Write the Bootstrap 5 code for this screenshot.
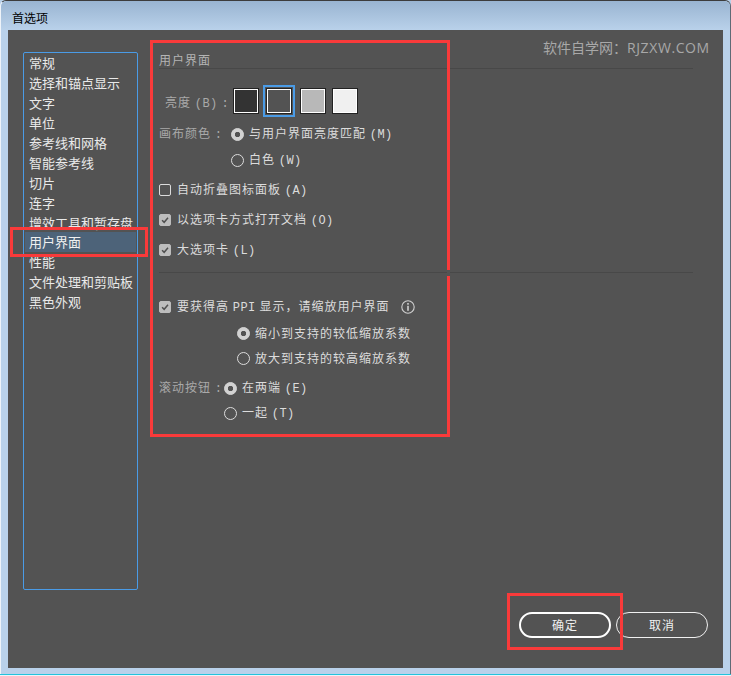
<!DOCTYPE html>
<html lang="zh">
<head>
<meta charset="utf-8">
<title>首选项</title>
<link href="https://cdn.jsdelivr.net/npm/bootstrap@5.3.0/dist/css/bootstrap.min.css" rel="stylesheet">
<script src="https://cdn.jsdelivr.net/npm/bootstrap@5.3.0/dist/js/bootstrap.bundle.min.js"></script>
<style>
html,body{margin:0;height:100%;background:#b9d1ea;overflow:hidden}
body{font-family:"Noto Sans CJK SC",sans-serif;font-size:12px;line-height:20px;color:#dcdcdc}
.ltn{font-family:"Liberation Mono",monospace;font-size:12px;letter-spacing:.5px}
.dlg{width:731px;height:676px;display:flex;flex-direction:column;position:relative;background:#b9d1ea;border:1px solid #5e6a76;border-top-color:#3c3c3c;border-left-color:#eef3f9;border-bottom:0;border-radius:6px 6px 0 0;box-sizing:border-box}
.dlg-end{position:absolute;left:-1px;right:-1px;bottom:1px;height:1px;background:#22c3dc;box-shadow:0 1px 0 #eef3f9}
.ttl{height:29px;flex:none;padding:8px 0 0 11px;background:linear-gradient(#99b4d1,#b9d1ea);color:#000;font:12px/18px "Noto Sans CJK SC",sans-serif;border-radius:6px 6px 0 0}
.pane{width:715px;height:638px;margin-left:7px;background:#535353;position:relative;flex:none;display:flex}
.side{width:115px;height:538px;margin:22px 0 0 15px;border:1px solid #4a9be6;border-radius:2px;padding:0 1px;background:transparent;flex:none}
.side .list-group-item{background:transparent;border:0;border-radius:0;padding:0 0 0 4px;height:20px;font:13px/20px "Noto Sans CJK SC",sans-serif;color:#e9e9e9;white-space:nowrap}
.side .list-group-item.active{background:#4d6379;color:#f0f0f0}
.mainp{margin-left:21px;width:534px;flex:none;padding-top:20px}
.hd{height:18px;line-height:20px;color:#b4b4b4;letter-spacing:1px}
.rule{height:1px;background:#484848}
.row-l{display:flex;align-items:center;white-space:nowrap;letter-spacing:1px}
.mut{color:#a9a9a9}
.swatches{display:flex;align-items:center;height:32px;margin-top:16px;padding-left:6px}
.swatches .mut{width:68px;padding-top:3px}
.swt{width:26px;height:26px;border:1px solid #222;box-shadow:inset 0 0 0 1px #fff;flex:none}
.swt-wrap{width:32px;height:32px;border:2px solid #4a9be6;display:flex;align-items:center;justify-content:center;margin:0 5px 0 4px;flex:none}
.s1{background:#333}.s2{background:#535353}.s3{background:#b8b8b8}.s4{background:#f0f0f0;margin-left:6px}
.form-check-input.opt,.form-check-input.opt:focus{width:13px;height:13px;margin:0;flex:none;background-color:transparent;border:1px solid #dcdcdc;box-shadow:none}
.form-check-input.opt[type=radio]:checked{background-color:#d2d2d2;border-color:#d2d2d2;background-image:radial-gradient(circle,#535353 0,#535353 2.4px,transparent 3px)}
.form-check-input.opt[type=checkbox]{border-radius:2px;width:12px;height:12px}
.form-check-input.opt[type=checkbox]:checked{background-color:#bdbdbd;border-color:#bdbdbd;background-image:url("data:image/svg+xml,%3Csvg xmlns='http://www.w3.org/2000/svg' viewBox='0 0 12 12'%3E%3Cpath d='M2.5 6.2 5 8.8 9.6 3.4' fill='none' stroke='%23505050' stroke-width='1.8'/%3E%3C/svg%3E");background-size:100% 100%}
.lbl{margin-left:6px}
input[type=radio]+.lbl{margin-left:5px}
.r1{height:20px;margin-top:7px}
.r1 .mut{width:72px}
.r2{height:20px;margin-top:6px;padding-left:72px}
.rc{height:20px;margin-top:10px}
.rule2{margin-top:12px}
.rp{height:20px;margin-top:24px}
.r3{height:20px;margin-top:5px;padding-left:78px}
.r3a{margin-top:6px}
.r4{height:20px;margin-top:10px}
.r4 .mut{width:65px}
.r5{height:20px;margin-top:5px;padding-left:65px}
.info{width:14px;height:14px;margin-left:11px;flex:none}
.foot{position:absolute;left:511px;top:582px;display:flex;gap:5px}
.btn.act{width:92px;height:26px;padding:0;border-radius:13px;background:transparent;color:#f0f0f0;font:12px/22px "Noto Sans CJK SC",sans-serif;letter-spacing:1px;border:1px solid #f0f0f0}
.btn.act.pri{border:2px solid #fff}
.wm{position:absolute;left:535px;top:8px;color:#a8a8a8;font:14px/20px "Open Sans","Noto Sans CJK SC",sans-serif;white-space:nowrap}
.wm span{letter-spacing:.6px}
.anno{position:absolute;border:3px solid #f93a3a;pointer-events:none}
.a1{left:142px;top:10px;width:300px;height:397px}
.a2{left:2px;top:197px;width:138px;height:30px}
.a3{left:499px;top:563px;width:116px;height:57px}
.gapline{position:absolute;left:439px;top:240px;width:3px;height:6px;background:#535353}
</style>
</head>
<body>
<div class="dlg">
  <div class="ttl">首选项</div>
  <div class="pane">
    <div class="list-group side">
      <div class="list-group-item">常规</div>
      <div class="list-group-item">选择和锚点显示</div>
      <div class="list-group-item">文字</div>
      <div class="list-group-item">单位</div>
      <div class="list-group-item">参考线和网格</div>
      <div class="list-group-item">智能参考线</div>
      <div class="list-group-item">切片</div>
      <div class="list-group-item">连字</div>
      <div class="list-group-item">增效工具和暂存盘</div>
      <div class="list-group-item active">用户界面</div>
      <div class="list-group-item">性能</div>
      <div class="list-group-item">文件处理和剪贴板</div>
      <div class="list-group-item">黑色外观</div>
    </div>
    <div class="mainp">
      <div class="hd">用户界面</div>
      <div class="rule"></div>
      <div class="swatches">
        <span class="mut row-l"><span>亮度 <span class="ltn">(B)</span> <span class="ltn">:</span></span></span>
        <span class="swt s1"></span>
        <span class="swt-wrap"><span class="swt s2"></span></span>
        <span class="swt s3"></span>
        <span class="swt s4"></span>
      </div>
      <div class="row-l r1"><span class="mut">画布颜色 <span class="ltn">:</span></span><input class="form-check-input opt" type="radio" name="a" checked><span class="lbl">与用户界面亮度匹配 <span class="ltn">(M)</span></span></div>
      <div class="row-l r2"><input class="form-check-input opt" type="radio" name="a"><span class="lbl">白色 <span class="ltn">(W)</span></span></div>
      <div class="row-l rc"><input class="form-check-input opt" type="checkbox"><span class="lbl">自动折叠图标面板 <span class="ltn">(A)</span></span></div>
      <div class="row-l rc"><input class="form-check-input opt" type="checkbox" checked><span class="lbl">以选项卡方式打开文档 <span class="ltn">(O)</span></span></div>
      <div class="row-l rc"><input class="form-check-input opt" type="checkbox" checked><span class="lbl">大选项卡 <span class="ltn">(L)</span></span></div>
      <div class="rule rule2"></div>
      <div class="row-l rp"><input class="form-check-input opt" type="checkbox" checked><span class="lbl">要获得高 <span class="ltn">PPI</span> 显示，请缩放用户界面</span>
        <svg class="info" viewBox="0 0 14 14"><circle cx="7" cy="7" r="6.2" fill="none" stroke="#d0d0d0" stroke-width="1.1"/><rect x="6.2" y="3" width="1.6" height="1.7" fill="#d0d0d0"/><rect x="6.2" y="5.8" width="1.6" height="5" fill="#d0d0d0"/></svg>
      </div>
      <div class="row-l r3 r3a"><input class="form-check-input opt" type="radio" name="b" checked><span class="lbl">缩小到支持的较低缩放系数</span></div>
      <div class="row-l r3"><input class="form-check-input opt" type="radio" name="b"><span class="lbl">放大到支持的较高缩放系数</span></div>
      <div class="row-l r4"><span class="mut">滚动按钮 <span class="ltn">:</span></span><input class="form-check-input opt" type="radio" name="c" checked><span class="lbl">在两端 <span class="ltn">(E)</span></span></div>
      <div class="row-l r5"><input class="form-check-input opt" type="radio" name="c"><span class="lbl">一起 <span class="ltn">(T)</span></span></div>
    </div>
    <div class="foot">
      <button type="button" class="btn act pri">确定</button>
      <button type="button" class="btn act">取消</button>
    </div>
    <div class="wm">软件自学网：<span>RJZXW.COM</span></div>
    <div class="anno a1"></div>
    <div class="gapline"></div>
    <div class="anno a2"></div>
    <div class="anno a3"></div>
  </div>
  <div class="dlg-end"></div>
</div>
</body>
</html>
